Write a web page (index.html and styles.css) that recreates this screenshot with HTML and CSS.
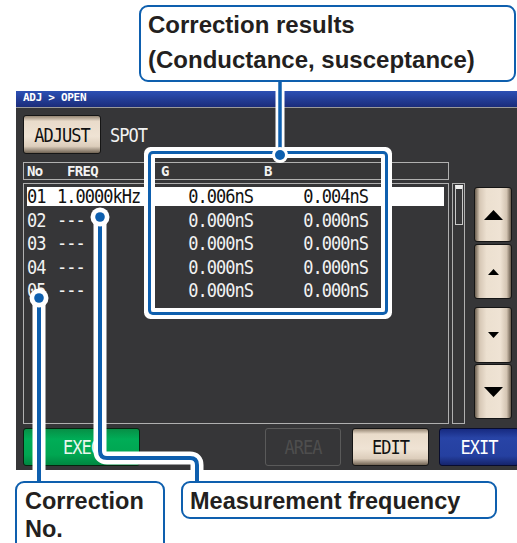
FILE: index.html
```html
<!DOCTYPE html>
<html lang="en">
<head>
    <meta charset="UTF-8">
    <meta name="viewport" content="width=device-width, initial-scale=1.0">
    <title>ADJ - OPEN</title>
    <link rel="stylesheet" href="styles.css">
</head>
<body>
    <div class="screen">
        <div class="titlebar">ADJ &gt; OPEN</div>
        <div class="topbar">
            <div class="btn beige adjust"><span>ADJUST</span></div>
            <span class="mode">SPOT</span>
        </div>
        <div class="main">
            <div class="table">
                <div class="thead cols">
                    <span>No</span><span class="h-freq">FREQ</span><span class="h-g">G</span><span class="h-b">B</span>
                </div>
                <div class="list">
                    <div class="row cols sel"><span>01</span><span>1.0000kHz</span><span class="num">0.006nS</span><span class="num">0.004nS</span></div>
                    <div class="row cols"><span>02</span><span>---</span><span class="num">0.000nS</span><span class="num">0.000nS</span></div>
                    <div class="row cols"><span>03</span><span>---</span><span class="num">0.000nS</span><span class="num">0.000nS</span></div>
                    <div class="row cols"><span>04</span><span>---</span><span class="num">0.000nS</span><span class="num">0.000nS</span></div>
                    <div class="row cols"><span>05</span><span>---</span><span class="num">0.000nS</span><span class="num">0.000nS</span></div>
                </div>
            </div>
            <div class="scroll"><div class="thumb"></div></div>
            <div class="arrows">
                <div class="btn arrow a1"><svg width="19" height="10"><polygon points="0,10 9.5,0 19,10" fill="#000"/></svg></div>
                <div class="btn arrow a2"><svg width="11" height="6"><polygon points="0,6 5.5,0 11,6" fill="#000"/></svg></div>
                <div class="btn arrow a3"><svg width="11" height="6"><polygon points="0,0 5.5,6 11,0" fill="#000"/></svg></div>
                <div class="btn arrow a4"><svg width="19" height="10"><polygon points="0,0 9.5,10 19,0" fill="#000"/></svg></div>
            </div>
        </div>
        <div class="footer">
            <div class="btn exec"><span>EXEC</span></div>
            <div class="btn area"><span>AREA</span></div>
            <div class="btn beige edit"><span>EDIT</span></div>
            <div class="btn exit"><span>EXIT</span></div>
        </div>
    </div>

    <div class="focus"></div>

    <svg class="leaders" width="517" height="543" viewBox="0 0 517 543">
        <g fill="none" stroke-linecap="round" stroke-linejoin="round">
            <path class="halo thin" d="M280 82V155"/>
            <path class="halo" d="M39 298V481M100 217V451Q100 458 107 458H190Q197 458 197 465V481"/>
            <path class="line thin" d="M280 82V155"/>
            <path class="line" d="M39 298V481M100 217V451Q100 458 107 458H190Q197 458 197 465V481"/>
        </g>
        <circle cx="280" cy="155" r="8" fill="#fff"/>
        <circle cx="39" cy="298" r="9.5" fill="#fff"/>
        <circle cx="100" cy="217" r="9.5" fill="#fff"/>
        <circle cx="280" cy="155" r="5" fill="#0e5fae"/>
        <circle cx="39" cy="298" r="4.8" fill="#0e5fae"/>
        <circle cx="100" cy="217" r="4.8" fill="#0e5fae"/>
    </svg>

    <div class="callout callout-top">Correction results<br>(Conductance, susceptance)</div>
    <div class="callout callout-no">Correction<br>No.</div>
    <div class="callout callout-freq">Measurement frequency</div>
</body>
</html>
```

FILE: styles.css
```css
body {
    margin: 0;
    width: 517px;
    height: 543px;
    overflow: hidden;
    position: relative;
    background-color: #fff;
    font-family: "DejaVu Sans Mono", monospace;
}

/* instrument screen */
.screen {
    margin: 91px 0 0 16px;
    width: 501px;
    height: 379px;
    overflow: hidden;
    background-color: #363638;
    color: #f2f2f2;
    font-size: 17px;
    letter-spacing: -1px;
}

.titlebar {
    height: 16px;
    padding-left: 7px;
    border-bottom: 1px solid #9a9a9a;
    background: linear-gradient(#2c50b4, #1b2c7a);
    color: #fff;
    font-size: 11px;
    font-weight: bold;
    line-height: 14px;
    letter-spacing: -0.3px;
}

.topbar {
    display: flex;
    align-items: center;
    height: 39px;
    margin-top: 7px;
    padding-left: 7px;
}

.btn {
    box-sizing: border-box;
    flex: none;
    display: flex;
    align-items: center;
    justify-content: center;
    border: 1px solid #151515;
    border-radius: 3px;
}

.btn span,
.mode {
    display: inline-block;
    transform: scaleY(1.12);
}

.beige {
    color: #111;
    background: linear-gradient(#948573 0, #e9dbca 14%, #efe3d4 55%, #dccdbb 82%, #706354 100%);
}

.adjust {
    width: 78px;
    height: 39px;
}

.mode {
    margin-left: 9px;
}

.main {
    display: flex;
    height: 262px;
    margin-top: 8px;
    padding-left: 7px;
}

.table {
    width: 426px;
    flex: none;
}

.cols {
    display: grid;
    grid-template-columns: 30px 100px 96px 115px 1fr;
}

.thead {
    box-sizing: border-box;
    height: 18px;
    padding-left: 3px;
    border: 1px solid #b0b0b0;
    font-size: 14px;
    font-weight: bold;
    line-height: 16px;
    letter-spacing: -0.7px;
}

.h-freq { padding-left: 10px; }
.h-g { padding-left: 4px; }
.h-b { padding-left: 11px; }

.list {
    box-sizing: border-box;
    height: 241px;
    margin-top: 3px;
    padding: 3px 4px 0 3px;
    border: 1px solid #b0b0b0;
    display: flex;
    flex-direction: column;
    gap: 4.5px;
}

.row {
    height: 19px;
    line-height: 19px;
}

.row > span {
    transform: scaleY(1.12);
}

.row .num {
    text-align: right;
}

.sel {
    background-color: #fff;
    color: #111;
}

.scroll {
    box-sizing: border-box;
    flex: none;
    width: 13px;
    height: 241px;
    margin: 21px 0 0 3px;
    padding: 1px 0 0 2px;
    border: 1px solid #b0b0b0;
}

.thumb {
    box-sizing: border-box;
    width: 8px;
    height: 40px;
    border: 1px solid #c8c8c8;
    border-top: 4px solid #eee;
}

.arrows {
    flex: none;
    width: 38px;
    margin: 25px 0 0 9px;
    display: flex;
    flex-direction: column;
}

.arrow {
    height: 55px;
    background: linear-gradient(to right, #6c5f50 0, #d6c7b5 13%, #ece0d0 32%, #efe3d4 70%, #d3c4b2 88%, #685b4c 100%);
}

.a2 { margin-top: 2px; }
.a3 { margin-top: 8px; height: 56px; }
.a4 { margin-top: 1px; }

.footer {
    display: flex;
    height: 38px;
    margin-top: 4px;
    padding-left: 7px;
}

.exec {
    width: 117px;
    border-color: #06250f;
    background: linear-gradient(#078f46, #00ad57 28%, #00a651 72%, #008741);
    color: #e9f6ec;
}

.area {
    width: 76px;
    margin-left: 125px;
    border-color: #5a5a5a;
    color: #4e4e4e;
}

.edit {
    width: 77px;
    margin-left: 11px;
}

.exit {
    width: 80px;
    margin-left: 10px;
    border-color: #080c2e;
    background: linear-gradient(#172a80, #2844a6 25%, #2540a0 75%, #15246c);
    color: #fff;
}

/* annotation layer */
.focus {
    position: absolute;
    left: 151px;
    top: 154px;
    box-sizing: border-box;
    width: 234px;
    height: 158px;
    border: 4px solid #fff;
    border-radius: 2px;
    box-shadow: 0 0 0 3px #0e5fae, 0 0 0 7px #fff;
}

.leaders {
    position: absolute;
    left: 0;
    top: 0;
}

.halo {
    stroke: #fff;
    stroke-width: 13;
}

.halo.thin {
    stroke-width: 9;
}

.line {
    stroke: #0e5fae;
    stroke-width: 4;
}

.line.thin {
    stroke-width: 3.5;
}

.callout {
    position: absolute;
    box-sizing: border-box;
    border: 2px solid #0e5fae;
    border-radius: 9px;
    background-color: #fff;
    color: #231f20;
    font-family: "Liberation Sans", Arial, sans-serif;
    font-weight: bold;
}

.callout-top {
    left: 139px;
    top: 5px;
    width: 377px;
    height: 77px;
    padding-left: 7px;
    font-size: 24px;
    line-height: 35px;
}

.callout-no {
    left: 15px;
    top: 481px;
    width: 150px;
    height: 80px;
    padding: 4px 0 0 8px;
    font-size: 23.5px;
    line-height: 28px;
}

.callout-freq {
    left: 181px;
    top: 481px;
    width: 316px;
    height: 38px;
    padding: 4px 0 0 7px;
    font-size: 23.5px;
    line-height: 28px;
}
```
